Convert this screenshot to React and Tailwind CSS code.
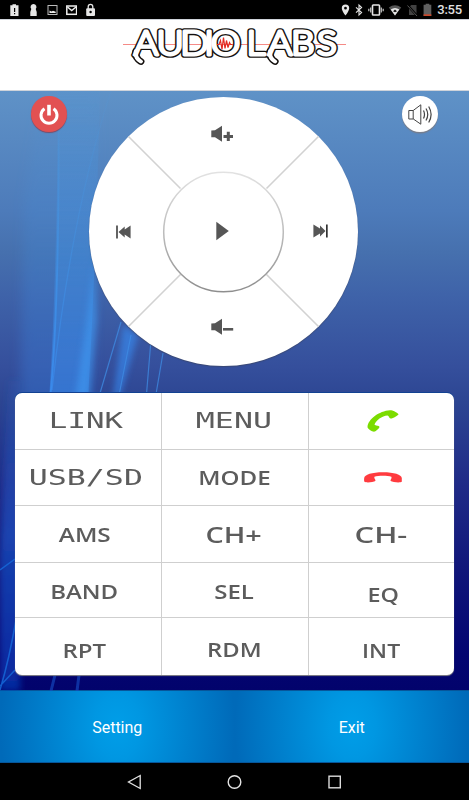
import React from "react";

const keys = [
  { label: "LINK", style: "text-[21.5px] scale-x-[1.43]", mono: true, move: "translate-x-[-2px]" },
  { label: "MENU", style: "text-[21.5px] scale-x-[1.47]", mono: true, move: "translate-x-[-1px]" },
  { call: "answer" },
  { label: "USB/SD", style: "text-[21.5px] scale-x-[1.47]", mono: true, move: "translate-x-[-2px]" },
  { label: "MODE", style: "text-[19px] scale-x-[1.27]", move: "translate-x-[-1px] translate-y-[1px]" },
  { call: "hangup" },
  { label: "AMS", style: "text-[19.5px] scale-x-[1.25]", move: "translate-x-[-3px] translate-y-[1px]" },
  { label: "CH+", style: "text-[21px] scale-x-[1.37]", move: "translate-x-[-1px] translate-y-[1px]" },
  { label: "CH-", style: "text-[21px] scale-x-[1.47]", move: "translate-x-[-1px] translate-y-[1px]" },
  { label: "BAND", style: "text-[19.5px] scale-x-[1.23]", move: "translate-x-[-3.5px] translate-y-[2px]" },
  { label: "SEL", style: "text-[19.5px] scale-x-[1.23]", move: "translate-x-[-1px] translate-y-[2px]" },
  { label: "EQ", style: "text-[19.5px] scale-x-[1.2]", move: "translate-x-[2px] translate-y-[5px]" },
  { label: "RPT", style: "text-[19.5px] scale-x-[1.23]", move: "translate-x-[-3.5px] translate-y-[4px]" },
  { label: "RDM", style: "text-[19.5px] scale-x-[1.22]", move: "translate-x-[-1px] translate-y-[3px]" },
  { label: "INT", style: "text-[19.5px] scale-x-[1.18]", move: "translate-y-[4px]" },
];

const StatusBar = () => {
  return (
    <div className="flex h-[19px] items-center justify-between bg-black pl-[9px] pr-[7px]">
      <div className="flex items-center gap-[8px] text-[#e6e6e6]">
        <svg width="11" height="14" viewBox="0 0 11 14" fill="currentColor">
          <path d="M3.500 1.200h3.500v1h2.500V13H1.300V2.200h2.200z" />
          <path d="M5 5h1.200v4H5zM5 10h1.200v1.200H5z" fill="#000" />
        </svg>
        <svg width="11" height="14" viewBox="0 0 11 14" fill="currentColor">
          <path d="M5.500 1a3 3 0 0 1 2.200 5L8.700 9v4H2.300V9l1-3A3 3 0 0 1 5.500 1z" />
        </svg>
        <svg width="11" height="14" viewBox="0 0 11 14" fill="none">
          <rect x="1" y="2.500" width="9" height="9" stroke="#bbb" />
          <path d="M2.500 10V7.600l2 .9 1.500-.7 2.700 1V10z" fill="#eee" />
        </svg>
        <svg width="11" height="14" viewBox="0 0 11 14" fill="none">
          <rect x=".8" y="3" width="9.800" height="8.300" stroke="#eee" strokeWidth="1.500" />
          <path d="M1.500 4l4.200 3.500L10 4" stroke="#eee" strokeWidth="1.500" />
        </svg>
        <svg width="11" height="14" viewBox="0 0 11 14" fill="none">
          <path d="M3.200 6V3.700a2.300 2.300 0 0 1 4.600 0V6" stroke="currentColor" strokeWidth="1.300" />
          <rect x="1.200" y="5.300" width="8.800" height="7.700" rx="1" fill="currentColor" />
          <circle cx="5.600" cy="9" r="1.200" fill="#000" />
        </svg>
      </div>
      <div className="flex items-center text-[#e6e6e6]">
        <svg width="9" height="14" viewBox="0 0 9 14" className="mr-[5px]">
          <path
            d="M4.500 1.500A3.700 3.700 0 0 0 .8 5.200c0 2.700 3.700 7.300 3.700 7.300s3.700-4.600 3.700-7.300a3.700 3.700 0 0 0-3.700-3.700zm0 2.300a1.400 1.400 0 1 1 0 2.800 1.400 1.400 0 0 1 0-2.800z"
            fill="currentColor"
          />
        </svg>
        <svg width="9" height="14" viewBox="0 0 9 14" className="mr-[4px]" fill="none">
          <path d="M1 4.300l5.600 5.300L4 12V2l2.600 2.400L1 9.700" stroke="currentColor" strokeWidth="1.100" />
        </svg>
        <svg width="16" height="14" viewBox="0 0 16 14" className="mr-[4px]" fill="none" stroke="currentColor">
          <rect x="4.500" y="2" width="7" height="10" rx=".8" strokeWidth="1.600" />
          <path d="M2.700 4.500v5M.8 5.800v2.500M13.300 4.500v5M15.200 5.800v2.500" stroke="#bbb" strokeWidth="1.300" />
        </svg>
        <svg width="14" height="14" viewBox="0 0 14 14" className="mr-[5px]">
          <path d="M.8 4.500Q7 0 13.200 4.500L7 12.500z" fill="#555" />
          <path d="M2.700 6.500Q7 3.500 11.300 6.500L7 12.500z" fill="#e6e6e6" />
          <path d="M5 8.300L7 6.500l2 1.800-2 .9z" fill="#111" />
        </svg>
        <svg width="11" height="14" viewBox="0 0 11 14" className="mr-[5px]">
          <path d="M4.300 2h5.200v10H2V4.300z" fill="#424242" />
          <path d="M.8 2.500l9 10" stroke="#000" strokeWidth="2.400" />
          <path d="M.5 2.500l9.500 10.500" stroke="#555" strokeWidth="1" />
        </svg>
        <svg width="9" height="14" viewBox="0 0 9 14" className="mr-[5px]">
          <path d="M2.700.8h3.600v1h2V13H.6V1.800h2.100z" fill="#606060" />
          <path d="M.6 11.300h7.700V13H.6z" fill="#c8472a" />
        </svg>
        <span className="font-['Roboto'] text-[13px] font-medium leading-none tracking-[-0.2px] text-[#e0e0e0]">3:55</span>
      </div>
    </div>
  );
};

// x of each letter before the horizontal stretch
const logoX = "121.500 142.300 163.800 185.800 191.600 224 243.500 264.500 288";
const tails = "M123.600 51Q122.300 57.500 128 61.500M245.600 51Q244.300 57.500 250 61.500";

const Logo = () => {
  return (
    <svg width="226" height="46" viewBox="122 20 226 46">
      <path d="M123 44.500h223" stroke="#f58a86" strokeWidth="1.200" />
      <g
        transform="scale(1.1 1)"
        fontFamily="Lato, sans-serif"
        fontWeight="300"
        fontSize="34"
        strokeLinejoin="round"
        strokeLinecap="round"
      >
        <g stroke="#14100e" strokeWidth="5.700" fill="none">
          <path d={tails} strokeWidth="6.600" />
          <text y="54.800" x={logoX} fill="#14100e">AUDIOLABS</text>
        </g>
        <g stroke="#fff" strokeWidth="2.900" fill="none" aria-hidden="true">
          <path d={tails} strokeWidth="3.800" />
          <text y="54.800" x={logoX} fill="#fff">AUDIOLABS</text>
        </g>
      </g>
      <path
        d="M217 44.500h2l1.500-4 1.500 9 1.500-12 1.500 11 1.500-8 1.500 7 1.500-5 1 2h2"
        fill="none"
        stroke="#e32a22"
        strokeWidth="1.200"
      />
    </svg>
  );
};

// light streaks on the left side of the wallpaper
const Wallpaper = () => {
  return (
    <svg className="absolute inset-0" width="469" height="600" viewBox="0 91 469 600" fill="none">
      <defs>
        <linearGradient id="beam" x1="0" y1="91" x2="0" y2="400" gradientUnits="userSpaceOnUse">
          <stop offset="0" stopColor="#4c9ae0" stopOpacity=".15" />
          <stop offset=".6" stopColor="#3f96ee" stopOpacity=".6" />
          <stop offset="1" stopColor="#3a8cf0" stopOpacity=".85" />
        </linearGradient>
        <linearGradient id="edge" x1="0" y1="380" x2="0" y2="690" gradientUnits="userSpaceOnUse">
          <stop offset="0" stopColor="#2a66cc" stopOpacity=".1" />
          <stop offset=".5" stopColor="#1c5bd0" stopOpacity=".6" />
          <stop offset="1" stopColor="#0a41c0" stopOpacity=".6" />
        </linearGradient>
        <filter id="haze" x="-50%" y="-10%" width="200%" height="120%">
          <feGaussianBlur stdDeviation="6 2" />
        </filter>
        <filter id="soft" x="-50%" y="-10%" width="200%" height="120%">
          <feGaussianBlur stdDeviation="3" />
        </filter>
        <filter id="soft1" x="-50%" y="-10%" width="200%" height="120%">
          <feGaussianBlur stdDeviation=".7" />
        </filter>
      </defs>
      <path d="M40 91L100 91L92 400L20 400L24 200z" fill="url(#beam)" opacity=".36" filter="url(#haze)" />
      <path d="M58 91L100 91Q96 260 88 400L49 400Q57 280 58 91z" fill="url(#beam)" opacity=".6" filter="url(#soft1)" />
      <path d="M94 260L97 320L89 400L75 400Q86 330 94 260z" fill="#419bf4" opacity=".6" filter="url(#soft)" />
      <path d="M58.500 91Q60 300 50 400" stroke="url(#beam)" strokeWidth="1.800" />
      <path d="M111 91Q72 210 52 390" stroke="url(#beam)" strokeWidth="1.200" opacity=".7" />
      <path d="M123 325L138 335L119 400L113 400z" fill="#388af0" opacity=".65" filter="url(#soft)" />
      <path d="M131 335L118 400M121 322L98 400M151 340L146 400M163 353L155 400" stroke="#3f8ce4" strokeWidth="1.200" opacity=".75" />
      <path d="M8 380L20 380L20 691L0 691V560z" fill="url(#edge)" filter="url(#soft)" />
      <path d="M0 570L15 559M0 690Q9 660 16 620M0 686L15 670" stroke="#176bdc" strokeWidth="1.500" opacity=".8" />
      <path d="M55 675L51 691M79 675L77 691" stroke="#1450c8" strokeWidth="3" opacity=".6" filter="url(#soft1)" />
    </svg>
  );
};

const VolumeIcon = ({ plus }) => {
  return (
    <svg width="23" height="18" viewBox="0 0 23 18" fill="#565656">
      <path d="M.3 5.500L4 5.300 11 .8v16L4 12.300H.3z" />
      {plus ? <path d="M12.500 10h3.300V6.800h3V10H22v3h-3.200v3h-3v-3h-3.300z" /> : <path d="M12 10h10.200v2.600H12z" />}
    </svg>
  );
};

const Dial = () => {
  return (
    <div className="relative ml-[22px] grid h-[269px] w-[269px] grid-cols-[75px_119px_75px] grid-rows-[75px_119px_75px] place-items-center rounded-full bg-white shadow-[0_1px_1px_rgba(60,70,100,0.7)]">
      <svg className="absolute inset-0" width="269" height="269" viewBox="0 0 269 269" fill="none">
        <defs>
          <linearGradient id="ring" x1="0" y1="0" x2="0" y2="1">
            <stop offset="0" stopColor="#e2e2e2" />
            <stop offset=".5" stopColor="#bcbcbc" />
            <stop offset="1" stopColor="#8e8e8e" />
          </linearGradient>
        </defs>
        <path d="M39.500 39.500l52 52M229.500 39.500l-52 52M39.500 229.500l52-52M229.500 229.500l-52-52" stroke="#d2d2d2" strokeWidth="1.600" />
        <circle cx="134.500" cy="135" r="59.800" stroke="url(#ring)" strokeWidth="1.500" />
      </svg>
      <button className="relative col-start-2 -ml-[2px] -mt-[1px]">
        <VolumeIcon plus />
      </button>
      <button className="relative col-start-1 row-start-2 -ml-[6px]">
        <svg width="15" height="14" viewBox="0 0 15 14" fill="#565656">
          <path d="M.3.500h1.400v13H.3z" fill="#222" />
          <path d="M2.500 7L8.700 1.500v3L14.600.5v13l-5.900-4v3z" />
        </svg>
      </button>
      <button className="relative col-start-2 row-start-2 -ml-[3px] -mt-[1px]">
        <svg width="13" height="20" viewBox="0 0 13 20" fill="#565656">
          <path d="M.3.800L12.800 10 .3 19.200z" />
        </svg>
      </button>
      <button className="relative col-start-3 row-start-2 -mt-[2px]">
        <svg width="15" height="14" viewBox="0 0 15 14" fill="#565656">
          <path d="M13 .500h1.700v13H13z" fill="#333" />
          <path d="M12.500 7L7 1.500v3L.4.500v13L7 9.500v3z" />
        </svg>
      </button>
      <button className="relative col-start-2 row-start-3 -ml-[2px] -mt-[3px]">
        <VolumeIcon />
      </button>
    </div>
  );
};

const CallIcon = ({ type }) => {
  if (type === "answer") {
    return (
      <svg width="32" height="22" viewBox="0 0 32 22" className="ml-[3px]">
        <path
          d="M.5 17C1 9 12 1 23 .2c3 0 7 2 8.500 4.100 0 1-6 4.600-8 4.300-1.500-.4-1.500-2.500-3-3C15 6 9 10.500 7.500 14.500c1 1.300 4.500 1 5 2.300 0 1.500-4 5-5.500 5C5 21.500.5 19 .5 17z"
          fill="#7bdc00"
        />
      </svg>
    );
  }
  return (
    <svg width="38" height="11" viewBox="0 0 38 11" className="ml-[3px]">
      <path
        d="M.2 6C.5 2.500 8 .2 19 .2S37.500 2.500 37.800 6v3.800c-2 1.200-9 .4-11.200-.8-.6-1.500 1.700-2.700.8-4.300-4-1.300-13-1.300-17 0-.7 1.600 1.600 2.800 1 4.300-2 1.200-9 2-11 .8C0 9 0 7.500.2 6z"
        fill="#ff3b3f"
      />
    </svg>
  );
};

const Keypad = () => {
  return (
    <div className="relative ml-[15px] mt-[27px] grid h-[282px] w-[439px] grid-cols-[147px_147px_145px] grid-rows-[57px_56px_57px_55px_57px] overflow-hidden rounded-[7px] bg-white shadow-[0_1px_1px_#888,0_-1px_0_#124292]">
      {keys.map((key, i) => (
        <button
          key={i}
          className={`flex items-center justify-center border-[#cfcfcf] ${i % 3 < 2 ? "border-r" : ""} ${i < 12 ? "border-b" : ""}`}
        >
          {key.call ? (
            <CallIcon type={key.call} />
          ) : (
            <span className={key.move}>
              <span
                className={`block whitespace-nowrap leading-none ${
                  key.mono
                    ? "font-['DejaVu_Sans_Mono',monospace] text-[#5c5c5c]"
                    : "font-['Open_Sans',sans-serif] font-semibold text-[#5c5c5c]"
                } ${key.style}`}
              >
                {key.label}
              </span>
            </span>
          )}
        </button>
      ))}
    </div>
  );
};

const BottomButton = ({ label }) => {
  return (
    <button className="flex-1 border-y border-[#07569a] bg-[radial-gradient(ellipse_50%_220%_at_50%_50%,#009ee8_0%,#0097e2_20%,#006ab9_100%)] pt-[3px] font-['Roboto'] text-[16px] text-white">
      {label}
    </button>
  );
};

const App = () => {
  return (
    <div className="flex h-[800px] w-[469px] flex-col overflow-hidden bg-black">
      <StatusBar />
      <div className="flex h-[72px] items-start justify-center border-y border-[#cfd3da] bg-white">
        <Logo />
      </div>
      <div className="relative h-[599px] bg-[linear-gradient(180deg,#5f92c7_0%,#4d7bba_20%,#4670ae_27%,#3f63a9_34%,#354f9c_46%,#2c4592_52%,#1f2a87_66%,#10167a_80%,#030571_94%,#02036c_100%)] pt-[6px]">
        <Wallpaper />
        <div className="relative flex pl-[31px]">
          <button className="-mt-[1px] flex h-9 w-9 items-center justify-center rounded-full bg-[#e25152] shadow-[0_1px_1px_#7a4a66]">
            <svg width="20" height="21" viewBox="0 0 20 21" fill="none" stroke="#fff" strokeWidth="3">
              <path d="M5.500 4.700a8 8 0 1 0 9 0" />
              <path d="M10 .8v10.700" strokeWidth="3.600" />
            </svg>
          </button>
          <Dial />
          <button className="-mt-[1px] ml-[44px] flex h-9 w-9 items-center justify-center rounded-full bg-white shadow-[0_1.500px_1px_#777e8c]">
            <svg width="24" height="21" viewBox="0 0 24 21" fill="none" stroke="#444" strokeWidth="1" className="mt-[1px]">
              <path d="M.8 6.500h4.400v8.500H.8zM5.200 6.500L12.800.8v19.400l-7.600-5.300" />
              <path d="M15.500 6.500q2 4 0 8M18 4.500q3.500 6 0 12M20.700 2.500q4.800 8 0 16" strokeWidth="1.200" />
            </svg>
          </button>
        </div>
        <Keypad />
      </div>
      <div className="flex h-[73px]">
        <BottomButton label="Setting" />
        <BottomButton label="Exit" />
      </div>
      <div className="flex h-[37px] items-center justify-center gap-[85px] bg-black">
        <svg width="15" height="16" viewBox="0 0 15 16" fill="none" stroke="#e4e4e4" strokeWidth="1.300">
          <path d="M13.200 1.500v13L1.500 8z" />
        </svg>
        <svg width="15" height="16" viewBox="0 0 15 16" fill="none" stroke="#e4e4e4" strokeWidth="1.400">
          <circle cx="7.500" cy="8" r="6.300" />
        </svg>
        <svg width="15" height="16" viewBox="0 0 15 16" fill="none" stroke="#dcdcdc" strokeWidth="1.400">
          <rect x="2" y="2.200" width="11.300" height="11.600" />
        </svg>
      </div>
    </div>
  );
};

export default App;
